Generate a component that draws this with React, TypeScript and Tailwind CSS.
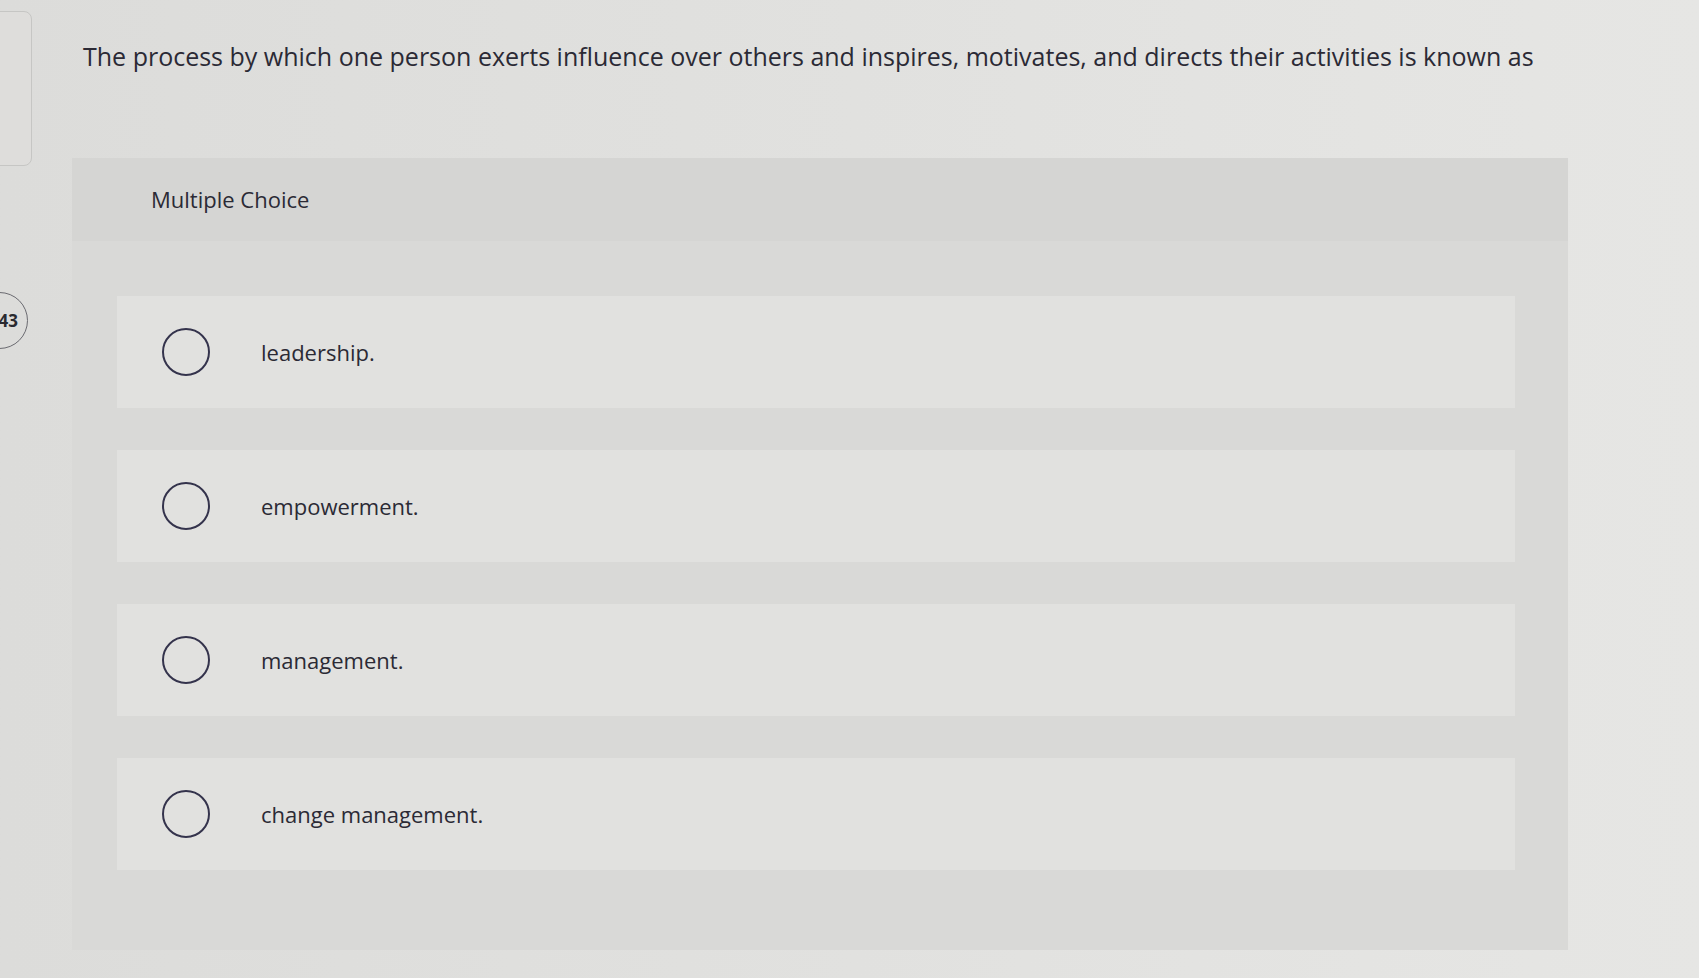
import React from "react";

const options = ["leadership.", "empowerment.", "management.", "change management."];

const Radio = () => (
  <span className="block w-[48px] h-[48px] shrink-0 rounded-full border-2 border-[#34334c]" />
);

const App = () => {
  return (
    <div
      className="min-h-[978px] w-full flex bg-gradient-to-r from-[#dcdcda] via-[#e1e1df] to-[#e6e6e4] text-[#2b2a35] overflow-hidden"
      style={{ fontFamily: "'Open Sans', Arial, sans-serif" }}
    >
      {/* left rail: previous panel edge and question number */}
      <div className="w-[33px] shrink-0 overflow-hidden flex flex-col">
        <div className="mt-[11px] -ml-[200px] w-[232px] h-[155px] rounded-lg border border-[#c6c6c4] bg-[#dedddb]" />
        <div className="mt-[126px] -ml-[34px] w-[62px] h-[57px] rounded-full border border-[#6a6a70] flex items-center justify-end pr-[9px]">
          <span className="text-[17px] font-bold text-[#2a2a30]">43</span>
        </div>
      </div>

      <div className="ml-[39px] w-[1496px] shrink-0 flex flex-col">
        <p className="mt-[40px] pl-[11px] text-[25px] leading-[32px] whitespace-nowrap">
          The process by which one person exerts influence over others and inspires, motivates, and directs their activities is known as
        </p>

        <div className="mt-[86px] bg-[#d9d9d7] flex flex-col">
          <div className="h-[83px] bg-[#d5d5d3] flex items-center pl-[79px]">
            <span className="text-[22px]">Multiple Choice</span>
          </div>

          <div className="pt-[55px] pb-[80px] pl-[45px] pr-[53px] flex flex-col gap-[42px]">
            {options.map((opt) => (
              <div key={opt} className="h-[112px] bg-[#e1e1df] flex items-center pl-[45px] gap-[51px]">
                <Radio />
                <span className="text-[22px]">{opt}</span>
              </div>
            ))}
          </div>
        </div>
      </div>
    </div>
  );
};

export default App;
